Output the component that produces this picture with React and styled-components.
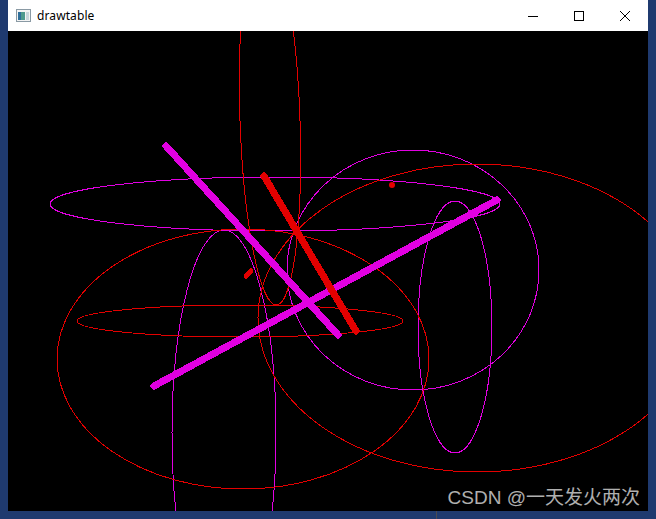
// App.jsx
import React from 'react';
import styled, { createGlobalStyle } from 'styled-components';

const GlobalStyle = createGlobalStyle`
  html, body {
    margin: 0;
    padding: 0;
    background: #1f3a6f;
  }
`;

// Styled components
const Desktop = styled.div`
  position: relative;
  width: 656px;
  height: 519px;
  padding: 0 8px 8px 8px;
  box-sizing: border-box;
  background: #1f3a6f;
  overflow: hidden;
`;

const Window = styled.div`
  display: flex;
  flex-direction: column;
  width: 640px;
`;

const TitleBar = styled.div`
  display: flex;
  align-items: center;
  height: 31px;
  background: #ffffff;
  font-family: "Noto Sans", "Open Sans", sans-serif;
  font-size: 12px;
  color: #000;
`;

const AppIcon = styled.div`
  display: flex;
  align-items: center;
  margin-left: 8px;
  width: 16px;
  height: 16px;
`;

const Title = styled.span`
  flex: 1;
  margin-left: 5px;
  margin-top: -1px;
  letter-spacing: 0.1px;
`;

const CtrlButton = styled.div`
  display: flex;
  align-items: center;
  justify-content: center;
  width: 46px;
  height: 31px;
`;

const Canvas = styled.div`
  position: relative;
  width: 640px;
  height: 480px;
  background: #000;
`;

const Watermark = styled.div`
  position: absolute;
  right: 8px;
  bottom: 2px;
  font-family: "Liberation Sans", "Noto Sans CJK SC", sans-serif;
  font-size: 19px;
  color: rgba(235, 235, 235, 0.75);
  white-space: nowrap;
`;

const TaskSeam = styled.div`
  position: absolute;
  left: 436px;
  bottom: 0;
  width: 1px;
  height: 8px;
  background: #4a4a50;
`;

const RED = '#e30000';
const MAG = '#e100e1';

const ellipses = [
  // magenta
  { cx: 275, cy: 204, rx: 225, ry: 27, c: MAG, r: 0 },
  { cx: 413, cy: 270, rx: 126, ry: 120, c: MAG, r: 0 },
  { cx: 455, cy: 327, rx: 37, ry: 126, c: MAG, r: 0 },
  { cx: 224, cy: 433, rx: 52, ry: 203, c: MAG, r: 0 },
  // red
  { cx: 243, cy: 359, rx: 186, ry: 130, c: RED, r: 0 },
  { cx: 240, cy: 321, rx: 163, ry: 16, c: RED, r: 0 },
  { cx: 477, cy: 318, rx: 219, ry: 154, c: RED, r: 0 },
  { cx: 270, cy: 120, rx: 30, ry: 185, c: RED, r: -2 },
];

const lines = [
  { x1: 166, y1: 146, x2: 338, y2: 335, w: 7, c: MAG },
  { x1: 154, y1: 386, x2: 497, y2: 200, w: 7, c: MAG },
  { x1: 264, y1: 176, x2: 356, y2: 331, w: 7, c: RED },
  { x1: 246, y1: 276, x2: 251, y2: 271, w: 5, c: RED },
];

const Drawing = () => (
  <svg width="640" height="480" viewBox="8 31 640 480" style={{ display: 'block' }}>
    {ellipses.map((e, i) => (
      <ellipse
        key={i}
        cx={e.cx}
        cy={e.cy}
        rx={e.rx}
        ry={e.ry}
        fill="none"
        stroke={e.c}
        strokeWidth="1"
        shapeRendering="crispEdges"
        transform={`rotate(${e.r} ${e.cx} ${e.cy})`}
      />
    ))}
    {lines.map((l, i) => (
      <line
        key={i}
        x1={l.x1}
        y1={l.y1}
        x2={l.x2}
        y2={l.y2}
        stroke={l.c}
        strokeWidth={l.w}
        strokeLinecap="round"
        shapeRendering="crispEdges"
      />
    ))}
    <circle cx="392" cy="185" r="3" fill={RED} />
  </svg>
);

const App = () => {
  return (
    <Desktop>
      <GlobalStyle />
      <Window>
        <TitleBar>
          <AppIcon>
            <svg width="15" height="13" viewBox="0 0 15 13">
              <rect x="0.5" y="0.5" width="14" height="12" fill="#f4f4f4" stroke="#8a9aa4" />
              <rect x="2" y="3" width="7" height="8" fill="#4f9a8e" />
              <rect x="2" y="3" width="3" height="8" fill="#2f6f9a" />
              <rect x="10" y="3" width="3" height="8" fill="#c9d6dc" />
            </svg>
          </AppIcon>
          <Title>drawtable</Title>
          <CtrlButton>
            <svg width="10" height="10" viewBox="0 0 10 10">
              <line x1="0" y1="5.5" x2="10" y2="5.5" stroke="#000" strokeWidth="1" />
            </svg>
          </CtrlButton>
          <CtrlButton>
            <svg width="10" height="10" viewBox="0 0 10 10">
              <rect x="0.5" y="0.5" width="9" height="9" fill="none" stroke="#000" strokeWidth="1" />
            </svg>
          </CtrlButton>
          <CtrlButton>
            <svg width="10" height="10" viewBox="0 0 10 10">
              <path d="M0 0 L10 10 M10 0 L0 10" stroke="#000" strokeWidth="1" />
            </svg>
          </CtrlButton>
        </TitleBar>
        <Canvas>
          <Drawing />
          <Watermark>CSDN @一天发火两次</Watermark>
        </Canvas>
      </Window>
      <TaskSeam />
    </Desktop>
  );
};

export default App;
